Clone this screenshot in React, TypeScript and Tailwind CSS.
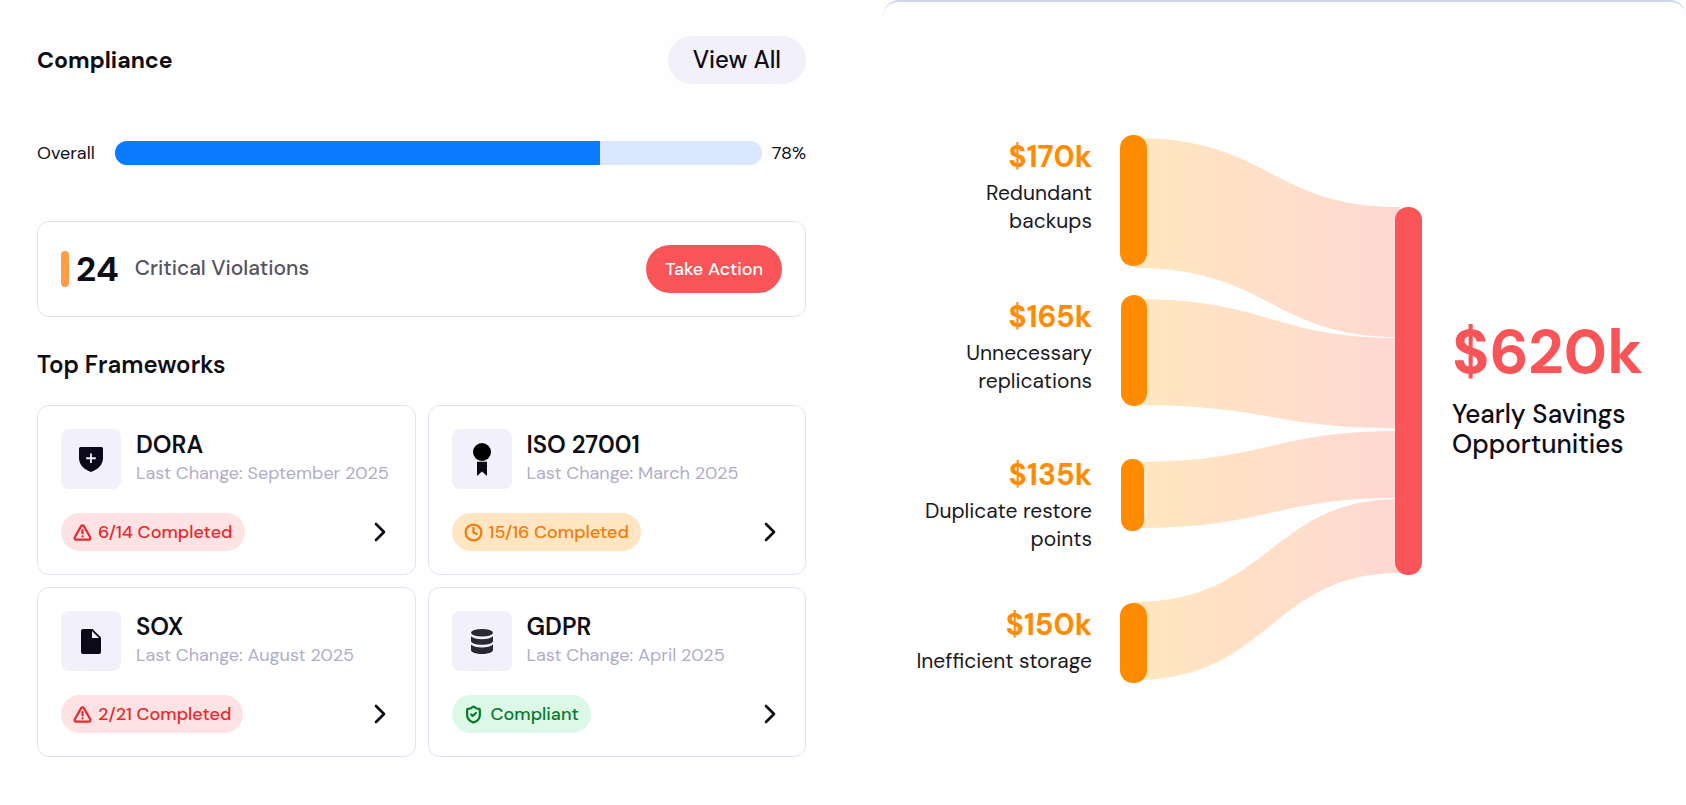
import { ReactNode } from "react";
import { ChevronRight, Clock, ShieldCheck, TriangleAlert } from "lucide-react";

type Status = "critical" | "warning" | "ok";

type Framework = {
  name: string;
  lastChange: string;
  status: Status;
  label: string;
  icon: ReactNode;
};

type Saving = {
  amount: string;
  label: string;
};

const ShieldIcon = () => (
  <svg viewBox="0 0 24 25" className="h-[25px] w-6" aria-hidden="true">
    <path
      d="M1.5 0h21A1.5 1.5 0 0 1 24 1.5V11c0 7-5.5 11.8-12 14C5.5 22.8 0 18 0 11V1.5A1.5 1.5 0 0 1 1.5 0z"
      fill="#0c0a1a"
    />
    <path d="M12 6.5v9.5M7.2 11.25h9.6" stroke="#f3f1fc" strokeWidth="1.8" />
  </svg>
);

const RibbonIcon = () => (
  <svg viewBox="0 0 18 33" className="h-[33px] w-[18px]" aria-hidden="true">
    <circle cx="9" cy="9" r="9" fill="#000" />
    <path d="M4 18.8h10V33l-5-4.6L4 33z" fill="#0c0a12" />
  </svg>
);

const FileIcon = () => (
  <svg viewBox="0 0 20 25" className="h-[25px] w-5" aria-hidden="true">
    <path
      d="M2 0h9.5L20 8.5V23a2 2 0 0 1-2 2H2a2 2 0 0 1-2-2V2a2 2 0 0 1 2-2zm9 2v7h7z"
      fill="#0c0a1a"
      fillRule="evenodd"
    />
  </svg>
);

const DatabaseIcon = () => (
  <svg viewBox="0 0 22 25" className="h-[25px] w-[22px]" fill="#292834" aria-hidden="true">
    <ellipse cx="11" cy="3.8" rx="11" ry="3.8" />
    <path d="M0 7.2c2 2 6 3 11 3s9-1 11-3V12c0 2.2-5 3.8-11 3.8S0 14.2 0 12z" />
    <path d="M0 15.6c2 2 6 3 11 3s9-1 11-3V21c0 2.4-5 4-11 4S0 23.4 0 21z" />
  </svg>
);

const frameworks: Framework[] = [
  {
    name: "DORA",
    lastChange: "September 2025",
    status: "critical",
    label: "6/14 Completed",
    icon: <ShieldIcon />,
  },
  {
    name: "ISO 27001",
    lastChange: "March 2025",
    status: "warning",
    label: "15/16 Completed",
    icon: <RibbonIcon />,
  },
  {
    name: "SOX",
    lastChange: "August 2025",
    status: "critical",
    label: "2/21 Completed",
    icon: <FileIcon />,
  },
  {
    name: "GDPR",
    lastChange: "April 2025",
    status: "ok",
    label: "Compliant",
    icon: <DatabaseIcon />,
  },
];

const savings: Saving[] = [
  { amount: "$170k", label: "Redundant backups" },
  { amount: "$165k", label: "Unnecessary replications" },
  { amount: "$135k", label: "Duplicate restore points" },
  { amount: "$150k", label: "Inefficient storage" },
];

const badgeStyles: Record<Status, string> = {
  critical: "gap-1.5 bg-[#ffe2e4] text-[#e62a2d]",
  warning: "gap-1.5 bg-[#ffe5c2] text-[#f07c0a]",
  ok: "gap-2 bg-[#dcf9e8] text-[#087a2c]",
};

const badgeIcons = {
  critical: TriangleAlert,
  warning: Clock,
  ok: ShieldCheck,
};

function Badge({ status, label }: { status: Status; label: string }) {
  const Icon = badgeIcons[status];
  return (
    <span
      className={`flex h-[38px] items-center rounded-full px-3 text-lg font-medium ${badgeStyles[status]}`}
    >
      <Icon size={19} strokeWidth={2.8} />
      {label}
    </span>
  );
}

function FrameworkCard({ name, lastChange, status, label, icon }: Framework) {
  return (
    <article className="rounded-xl border border-[#e4e1f3] bg-white p-[23px]">
      <div className="flex gap-[15px]">
        <div className="flex size-[60px] shrink-0 items-center justify-center rounded-lg bg-[#f2f0fb]">
          {icon}
        </div>
        <div>
          <h3 className="text-2xl leading-8 font-semibold">{name}</h3>
          <p className="text-lg leading-6 whitespace-nowrap text-[#b0adc9]">
            Last Change: {lastChange}
          </p>
        </div>
      </div>
      <div className="mt-6 flex items-center justify-between">
        <Badge status={status} label={label} />
        <button type="button" aria-label={`Open ${name}`} className="-mr-1">
          <ChevronRight size={32} strokeWidth={2} />
        </button>
      </div>
    </article>
  );
}

function Compliance() {
  return (
    <section className="rounded-2xl bg-[#fefefe] px-[37px] pt-9 pb-12">
      <div className="flex items-center justify-between">
        <h2 className="text-[23px] leading-8 font-bold">Compliance</h2>
        <button
          type="button"
          className="h-12 rounded-full bg-[#f2f0fb] px-[25px] text-2xl font-medium"
        >
          View All
        </button>
      </div>

      <div className="mt-[57px] flex items-center text-lg leading-6">
        <span className="w-[78px]">Overall</span>
        <div className="h-6 flex-1 overflow-hidden rounded-full bg-[#d9e7ff]">
          <div className="h-full w-3/4 bg-[#0a7aff]" />
        </div>
        <span className="w-11 text-right">78%</span>
      </div>

      <div className="mt-14 flex h-24 items-center rounded-xl border border-[#e4e1f3] bg-white px-[23px]">
        <span className="h-9 w-2 rounded-full bg-[#ff9d45]" />
        <span className="ml-[7px] text-[35px] font-bold">24</span>
        <span className="ml-4 text-[21px] font-medium text-[#555360]">Critical Violations</span>
        <button
          type="button"
          className="ml-auto h-12 rounded-full bg-[#f95457] px-[19px] text-lg font-medium text-white"
        >
          Take Action
        </button>
      </div>

      <h2 className="mt-8 text-2xl leading-8 font-semibold">Top Frameworks</h2>
      <div className="mt-6 grid grid-cols-2 gap-3">
        {frameworks.map((framework) => (
          <FrameworkCard key={framework.name} {...framework} />
        ))}
      </div>
    </section>
  );
}

function SavingsFlow() {
  return (
    <svg viewBox="0 0 302 548" className="h-[548px] w-[302px] shrink-0" aria-hidden="true">
      <defs>
        <linearGradient id="flow" gradientUnits="userSpaceOnUse" x1="28" y1="0" x2="275" y2="0">
          <stop offset="0" stopColor="#ffe6bf" />
          <stop offset="1" stopColor="#ffd8d3" />
        </linearGradient>
      </defs>
      <g fill="url(#flow)">
        <path d="M14 3C150 3 150 72 280 72V202C150 202 150 133 14 133z" />
        <path d="M14 164C150 164 150 203 280 203V293C150 293 150 270 14 270z" />
        <path d="M14 327C150 327 150 296 280 296V363C150 363 150 393 14 393z" />
        <path d="M14 467C150 467 150 364 280 364V438C150 438 150 545 14 545z" />
      </g>
      <g fill="#ff8c00">
        <rect x="0" y="0" width="27" height="131" rx="13" />
        <rect x="1" y="160" width="26" height="111" rx="13" />
        <rect x="1" y="324" width="23" height="72" rx="11" />
        <rect x="0" y="468" width="27" height="80" rx="13" />
      </g>
      <rect x="275" y="72" width="27" height="368" rx="13" fill="#f95457" />
    </svg>
  );
}

function Savings() {
  return (
    <section className="flex justify-end rounded-2xl border-t-2 border-[#cfd4ee] bg-[#fefefe] pt-[133px] pr-9">
      <ul className="mr-7 grid w-[180px] grid-rows-[160px_158px_150px_auto] content-start pt-1 text-right">
        {savings.map((saving) => (
          <li key={saving.amount}>
            <p className="text-[30px] leading-9 font-bold text-[#ff8c00]">{saving.amount}</p>
            <p className="mt-1 text-[21px] leading-7 text-[#1a191f]">{saving.label}</p>
          </li>
        ))}
      </ul>
      <SavingsFlow />
      <div className="ml-[30px] w-[198px] shrink-0 pt-[185px]">
        <p className="text-[62px] leading-[64px] font-bold text-[#f95457]">$620k</p>
        <p className="mt-[15px] text-[26px] leading-[30px] font-medium">
          Yearly Savings Opportunities
        </p>
      </div>
    </section>
  );
}

export default function App() {
  return (
    <main className="grid min-h-screen grid-cols-[21fr_20fr] gap-10 bg-white font-['DM_Sans',Inter,sans-serif] text-[#0e0d15]">
      <Compliance />
      <Savings />
    </main>
  );
}
